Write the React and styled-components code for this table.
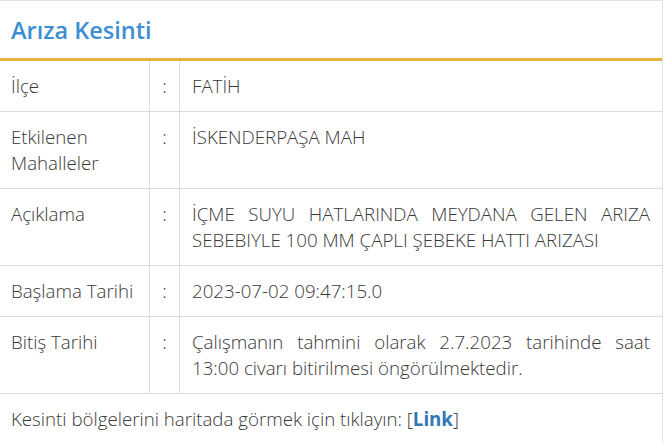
import React from "react";
import styled, { createGlobalStyle } from "styled-components";

const GlobalStyle = createGlobalStyle`
  body {
    margin: 0;
    background: #fff;
    font-family: "Open Sans", "Liberation Sans", sans-serif;
  }
`;

const Panel = styled.div`
  width: 663px;
  border-top: 1px solid #e3e3e3;
  border-right: 1px solid #e3e3e3;
  border-bottom: 1px solid #e3e3e3;
  box-sizing: border-box;
  background: #fff;
`;

const Header = styled.div`
  height: 57px;
  display: flex;
  align-items: center;
  padding: 0 11px;
  border-bottom: 3px solid #e6b23c;
`;

const Title = styled.h2`
  margin: 0;
  font-size: 23.5px;
  font-weight: 600;
  color: #3b8fd2;
`;

const Table = styled.table`
  width: 100%;
  border-collapse: collapse;
  font-size: 18.7px;
  font-weight: 300;
  line-height: 26px;
  color: #383838;
`;

const Row = styled.tr`
  border-bottom: 1px solid #dcdcdc;
`;

const Cell = styled.td`
  vertical-align: top;
  padding: 12px 12px 12px ${(p) => p.$left || "12px"};
  text-align: ${(p) => (p.$justify ? "justify" : "left")};
  border-right: ${(p) => (p.$divider ? "1px solid #dcdcdc" : "none")};
`;

const Label = styled(Cell)`
  width: 126px;
`;

const Colon = styled(Cell)`
  width: 29px;
  padding-left: 0;
  padding-right: 0;
  text-align: center;
`;

const Footer = styled.div`
  padding: 12px 11px;
  font-size: 18.7px;
  font-weight: 300;
  line-height: 26px;
  color: #383838;
`;

const Link = styled.a`
  color: #2f77b8;
  font-weight: 700;
  text-decoration: none;
`;

const rows = [
  { label: "İlçe", value: "FATİH" },
  { label: "Etkilenen Mahalleler", value: "İSKENDERPAŞA MAH" },
  {
    label: "Açıklama",
    value:
      "İÇME SUYU HATLARINDA MEYDANA GELEN ARIZA SEBEBIYLE 100 MM ÇAPLI ŞEBEKE HATTI ARIZASI",
  },
  { label: "Başlama Tarihi", value: "2023-07-02 09:47:15.0" },
  {
    label: "Bitiş Tarihi",
    value:
      "Çalışmanın tahmini olarak 2.7.2023 tarihinde saat 13:00 civarı bitirilmesi öngörülmektedir.",
  },
];

export default function App() {
  return (
    <>
      <GlobalStyle />
      <Panel>
        <Header>
          <Title>Arıza Kesinti</Title>
        </Header>
        <Table>
          <tbody>
            {rows.map((r) => (
              <Row key={r.label}>
                <Label $divider $left="11px">{r.label}</Label>
                <Colon $divider>:</Colon>
                <Cell $justify>{r.value}</Cell>
              </Row>
            ))}
          </tbody>
        </Table>
        <Footer>
          Kesinti bölgelerini haritada görmek için tıklayın: [<Link href="#">Link</Link>]
        </Footer>
      </Panel>
    </>
  );
}
